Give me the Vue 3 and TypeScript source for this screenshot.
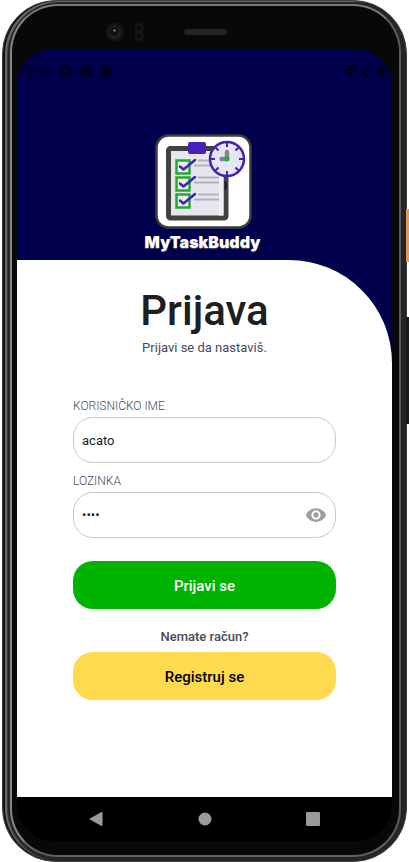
<script setup lang="ts">
import { ref } from 'vue'

const username = ref<string>('acato')
const password = ref<string>('1234')
const showPassword = ref<boolean>(false)

const ticks: number[] = [0, 45, 90, 135, 180, 225, 270, 315]
const rows: number[] = [-1, 16, 33]
</script>

<template>
  <div class="device">
    <span class="side-key power"></span>
    <span class="side-key volume"></span>
    <div class="rim">
      <div class="bezel">
        <div class="sensors">
          <svg class="camera" width="20" height="20" viewBox="0 0 20 20" aria-hidden="true">
            <circle cx="10" cy="10" r="9.5" fill="#121314" />
            <circle cx="10" cy="10" r="6.5" fill="#1f2021" />
            <circle cx="9.5" cy="9.5" r="4" fill="#0d0e0f" />
            <circle cx="9.5" cy="8.5" r="1.3" fill="#77787a" />
          </svg>
          <svg class="proximity" width="10" height="20" viewBox="0 0 10 20" aria-hidden="true">
            <rect x=".5" y=".5" width="9" height="19" rx="4" fill="#111213" />
            <circle cx="5" cy="5.5" r="3" fill="#0a0b0b" stroke="#171819" />
            <circle cx="5" cy="14.5" r="3" fill="#0a0b0b" stroke="#171819" />
          </svg>
          <span class="speaker"></span>
        </div>

        <div class="screen">
          <header class="hero">
            <div class="status">
              <span class="time">5:09</span>
              <svg width="14" height="14" viewBox="0 0 14 14" aria-hidden="true">
                <circle cx="7" cy="7" r="6.5" fill="#000020" />
                <path d="M3 10 6 3.500h2L11 10l-1 .5L7 6.500l-3 4z" fill="#00004c" />
              </svg>
              <svg class="second" width="14" height="14" viewBox="0 0 14 14" aria-hidden="true">
                <circle cx="7" cy="7" r="6" fill="#000020" />
                <path d="M5 3h2v4H5zM9 3.500a2 2 0 0 1 0 4z" fill="#00004c" />
              </svg>
              <svg class="card-icon" width="10" height="12" viewBox="0 0 10 12" aria-hidden="true">
                <path d="M3.500 0H9a1 1 0 0 1 1 1v11H0V4zM4 2v2h1V2zm2 0v2h1V2z" fill="#000020" fill-rule="evenodd" />
              </svg>
              <span class="spacer"></span>
              <svg width="14" height="12" viewBox="0 0 14 12" aria-hidden="true">
                <path d="M0 3Q7-2.500 14 3L7 12z" fill="#000020" />
              </svg>
              <svg class="signal" width="12" height="12" viewBox="0 0 12 12" aria-hidden="true">
                <path d="M0 12 12 0v12zM8.500 5v6H11V5z" fill="#000020" fill-rule="evenodd" />
              </svg>
              <svg width="8" height="12" viewBox="0 0 8 12" aria-hidden="true">
                <path d="M2.500 0h3v1.500H8V12H0V1.500h2.500z" fill="#000020" />
              </svg>
            </div>

            <div class="identity">
              <svg width="98" height="96" viewBox="0 0 98 96" role="img" aria-label="MyTaskBuddy">
                <rect x="2.500" y="1.500" width="94" height="92" rx="12" fill="#fff" stroke="#3c3d3d" stroke-width="2.500" />
                <rect x="14.500" y="14.500" width="57.500" height="69.500" rx="2" fill="#e6e7ee" stroke="#42433e" stroke-width="5" stroke-linejoin="round" />
                <rect x="65" y="17" width="4.500" height="64.500" fill="#f0f0f4" />
                <rect x="34" y="8" width="18" height="12" rx="2" fill="#4a1fb8" />
                <g v-for="y in rows" :key="y" :transform="`translate(0 ${y})`">
                  <rect x="22.500" y="27.500" width="13" height="13" fill="#eceef3" stroke="#22aa30" stroke-width="2.500" />
                  <path d="m26 33.500 3.500 3L41 27" fill="none" stroke="#4520b2" stroke-width="2.500" stroke-linecap="round" stroke-linejoin="round" />
                  <path d="M44 27.500h21M40 32.500h25" stroke="#b0b2be" stroke-width="2" />
                </g>
                <path d="M71 48q2 2 0 7" fill="none" stroke="#0b0b40" stroke-width="1.500" />
                <circle cx="73" cy="25" r="17" fill="#e4e7f3" stroke="#4520b2" stroke-width="2.500" />
                <path
                  v-for="angle in ticks"
                  :key="angle"
                  d="M73 9v4"
                  :transform="`rotate(${angle} 73 25)`"
                  stroke="#4520b2"
                  stroke-width="2"
                />
                <path d="M73 24v-6M72 25h-4.500" stroke="#858689" stroke-width="4.500" stroke-linecap="round" />
                <circle cx="73" cy="25" r="2.500" fill="#16b33a" />
              </svg>
              <p class="brand">MyTaskBuddy</p>
            </div>
          </header>

          <main class="sheet">
            <h1>Prijava</h1>
            <p class="lead">Prijavi se da nastaviš.</p>

            <form @submit.prevent>
              <label for="username">KORISNIČKO IME</label>
              <input id="username" v-model="username" class="field" type="text" autocomplete="username" />

              <label for="password">LOZINKA</label>
              <div class="field secret">
                <input
                  id="password"
                  v-model="password"
                  :type="showPassword ? 'text' : 'password'"
                  autocomplete="current-password"
                />
                <button class="eye" type="button" aria-label="Prikaži lozinku" @click="showPassword = !showPassword">
                  <svg width="22" height="22" viewBox="0 0 24 24" aria-hidden="true">
                    <path
                      d="M12 4.500C7 4.500 2.730 7.610 1 12c1.730 4.390 6 7.500 11 7.500s9.270-3.110 11-7.500c-1.730-4.390-6-7.500-11-7.500zM12 17c-2.760 0-5-2.240-5-5s2.240-5 5-5 5 2.240 5 5-2.240 5-5 5zm0-8c-1.660 0-3 1.340-3 3s1.340 3 3 3 3-1.340 3-3-1.340-3-3-3z"
                      fill="#9e9e9e"
                    />
                  </svg>
                </button>
              </div>

              <button class="action primary" type="submit">Prijavi se</button>
              <p class="hint">Nemate račun?</p>
              <button class="action secondary" type="button">Registruj se</button>
            </form>
          </main>

          <nav class="softkeys" aria-label="Sistem">
            <button type="button" aria-label="Nazad">
              <svg width="14" height="14" viewBox="0 0 14 14"><path d="M0 7 12.500 0q1 0 1 1v12q0 1-1 1z" fill="#9b9b9b" /></svg>
            </button>
            <button type="button" aria-label="Početna">
              <svg width="14" height="14" viewBox="0 0 14 14"><circle cx="7" cy="7" r="6.500" fill="#9b9b9b" /></svg>
            </button>
            <button type="button" aria-label="Nedavno">
              <svg width="14" height="14" viewBox="0 0 14 14"><rect width="14" height="14" rx="1" fill="#9b9b9b" /></svg>
            </button>
          </nav>
        </div>
      </div>
    </div>
  </div>
</template>

<style>
body {
  background: #fff;
}
</style>

<style scoped>
.device {
  position: relative;
  display: flex;
  box-sizing: border-box;
  min-height: 100vh;
  padding: 0 2px;
  font-family: Roboto, sans-serif;
}

.rim {
  display: flex;
  flex: 1;
  box-sizing: border-box;
  padding: 3px 5px 4px 7px;
  border: 1px solid #3c3e3f;
  border-radius: 54px;
  background: #242526;
  box-shadow: inset 2px 0 0 #111213, inset 4px 1px 0 #66686a, inset 5px 0 0 #3c3e3f;
}

.bezel {
  display: flex;
  flex: 1;
  flex-direction: column;
  padding: 0 7px 14px 5px;
  border: 2px solid;
  border-color: #77797b #5a5c5e #606264 #85878a;
  border-radius: 48px;
  background: #08080a;
}

.side-key {
  position: absolute;
  right: 0;
  width: 3px;
}

.power {
  top: 209px;
  height: 53px;
  background: #dc9c5c;
}

.volume {
  top: 317px;
  height: 107px;
  background: #1a1b1c;
}

.sensors {
  display: flex;
  align-items: center;
  height: 43px;
  padding: 0 88px;
}

.proximity {
  margin-left: 9px;
}

.camera,
.proximity {
  margin-top: 9px;
}

.speaker {
  width: 43px;
  height: 6px;
  margin: 8px 0 0 40px;
  border-radius: 3px;
  background: #222324;
}

.screen {
  display: flex;
  flex: 1;
  flex-direction: column;
  overflow: hidden;
  border-radius: 36px;
  background: #00004c;
}

.hero {
  display: flex;
  flex-direction: column;
  align-items: center;
  height: 211px;
}

.status {
  display: flex;
  align-items: center;
  align-self: stretch;
  height: 14px;
  margin: 15px 0 56px;
  padding: 0 7px 0 8px;
  color: #000020;
}

.time {
  width: 34px;
  font-size: 13px;
  line-height: 14px;
}

.second {
  margin-left: 6px;
}

.card-icon {
  margin-left: 9px;
}

.spacer {
  flex: 1;
}

.signal {
  margin: 0 7px 0 1px;
}

.identity {
  display: flex;
  flex-direction: column;
  align-items: center;
  padding-right: 4px;
}

.brand {
  margin: 1px 0 0;
  color: #fff;
  font: 900 16px/22px Inter, sans-serif;
  text-shadow: 0 1px 1px #555;
}

.sheet {
  flex: 1;
  padding: 25px 56px;
  border-top-right-radius: 103px;
  background: #fff;
  color: #49495e;
}

h1 {
  margin: 0;
  color: #1e201f;
  font-size: 42px;
  font-weight: 500;
  line-height: 52px;
  text-align: center;
}

.lead,
.hint {
  margin: 0;
  font-size: 13px;
  line-height: 22px;
  text-align: center;
}

form {
  display: flex;
  flex-direction: column;
  margin-top: 39px;
}

label {
  margin-bottom: 3px;
  font-size: 12px;
  font-weight: 300;
  line-height: 16px;
}

.field {
  box-sizing: border-box;
  width: 100%;
  height: 46px;
  margin-bottom: 10px;
  padding: 0 8px;
  border: 1px solid #c8c8c8;
  border-radius: 20px;
  background: #fff;
}

input {
  color: #1c1c1c;
  font: 13px/20px Roboto, sans-serif;
}

.secret {
  display: flex;
  align-items: center;
  margin-bottom: 23px;
}

.secret input {
  flex: 1;
  min-width: 0;
  padding: 0;
  border: 0;
  background: none;
}

.eye {
  display: flex;
  padding: 0;
  border: 0;
  background: none;
}

.action {
  height: 48px;
  padding: 2px 0 0;
  border: 0;
  border-radius: 20px;
  font: 500 15px/20px Roboto, sans-serif;
}

.primary {
  background: #00b300;
  color: #fff;
}

.hint {
  margin: 17px 0 4px;
  font-weight: 500;
}

.secondary {
  background: #ffda4d;
  color: #000;
}

.softkeys {
  display: flex;
  align-items: center;
  justify-content: space-between;
  height: 44px;
  padding: 0 72px;
  background: #000;
}

.softkeys button {
  display: flex;
  padding: 0;
  border: 0;
  background: none;
}
</style>
